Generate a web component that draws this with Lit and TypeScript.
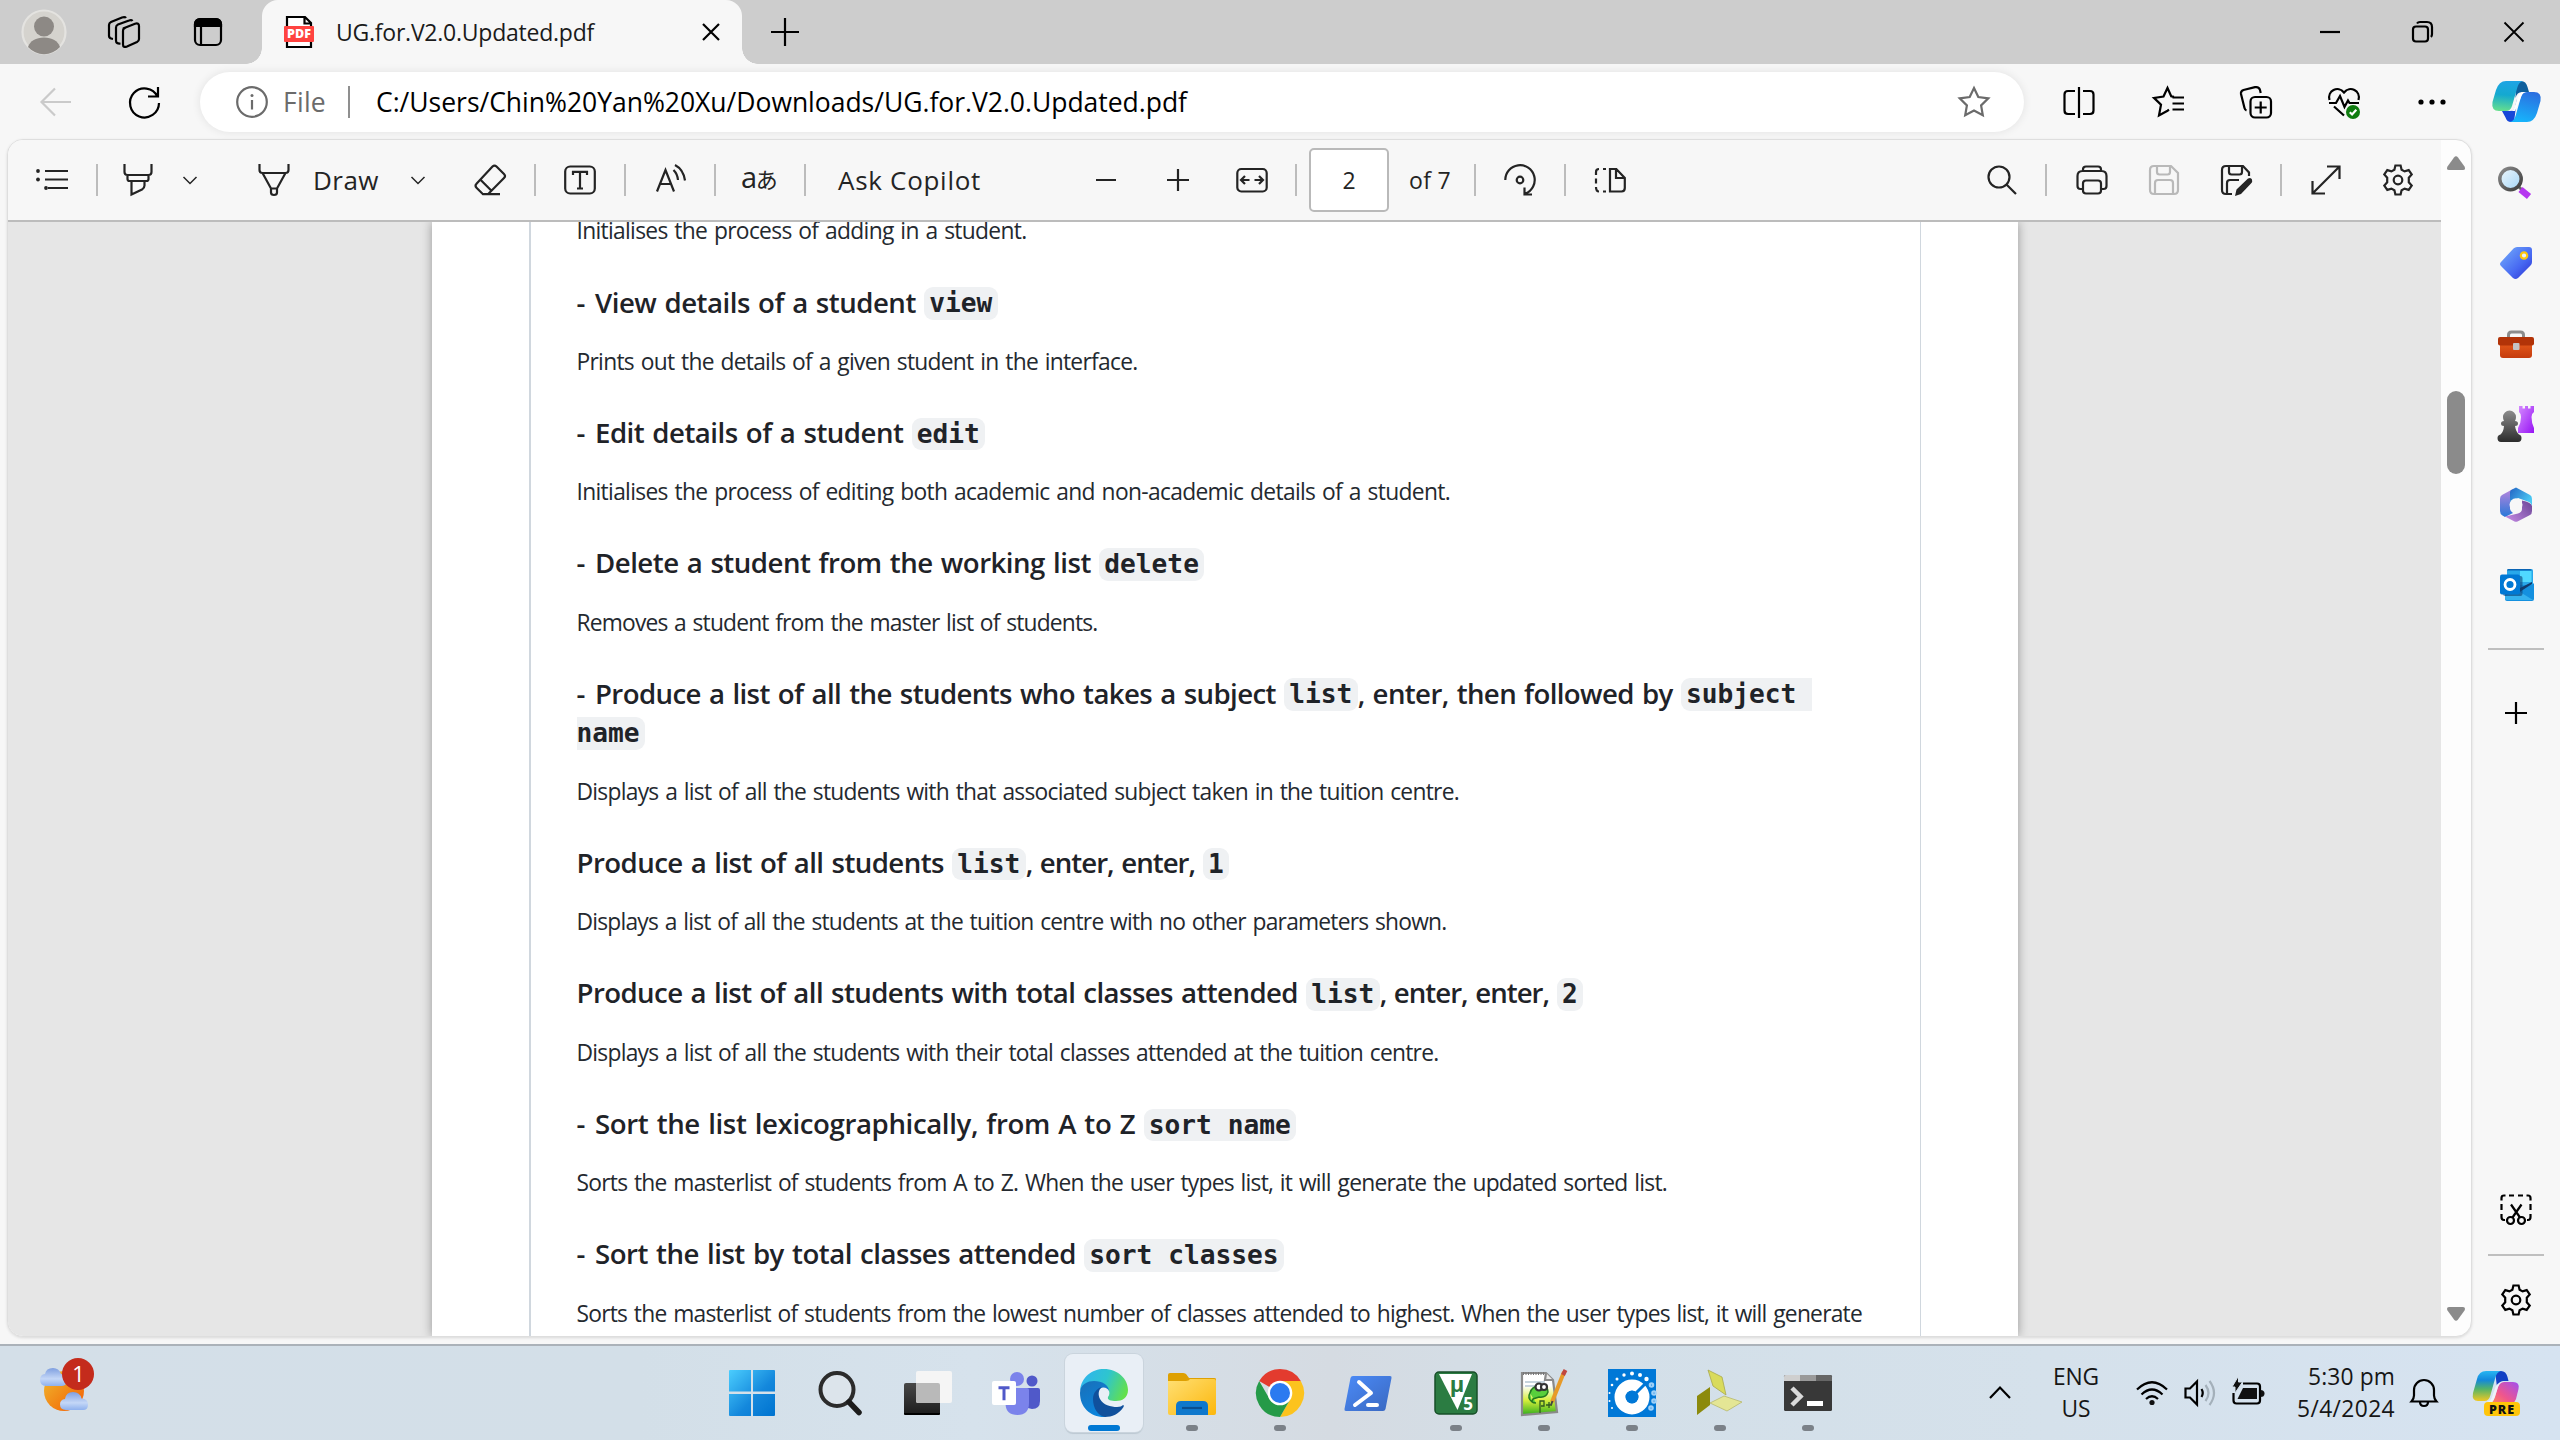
import { LitElement, html, svg, css, unsafeCSS, nothing } from "lit";
import { customElement, property } from "lit/decorators.js";

/** A run of text whose tracking is adjusted so that it fills the given advance width. */
@customElement("fit-text")
class FitText extends LitElement {
  static styles = css`
    :host { display: inline; white-space: pre; }
  `;
  @property() text = "";
  @property({ type: Number }) width = 0;

  firstUpdated() {
    const span = this.renderRoot.querySelector("span") as HTMLElement;
    const natural = span.getBoundingClientRect().width;
    if (this.width && natural) {
      span.style.letterSpacing = `${(this.width - natural) / this.text.length}px`;
    }
  }

  render() {
    return html`<span>${this.text}</span>`;
  }
}

const fit = (text: string, width: number) => html`<fit-text .text=${text} .width=${width}></fit-text>`;

/** Stroked or filled pictogram in its own pixel box. */
const icon = (w: number, h: number, body: unknown, cls = "") =>
  html`<svg class="icon ${cls}" width=${w} height=${h} viewBox="0 0 ${w} ${h}">${body}</svg>`;

const gearPath =
  "M13.4 1.5h5.2l1 4.2 3 1.7 4.1-1.3 3 4.3-2.9 3.3v4.6l2.9 3.3-3 4.3-4.1-1.3-3 1.7-1 4.2h-5.2l-1-4.2-3-1.7-4.1 1.3-3-4.3 2.9-3.3v-4.6L2.3 10.400l3-4.3 4.100 1.300 3-1.700z";

const I = {
  avatar: svg`<circle cx="22" cy="22" r="21.500" fill="#d5d3ce" stroke="#e4e3e0"/><ellipse cx="22" cy="16.500" rx="10" ry="10" fill="#8d8985"/><path d="M6 37c2-6 8-9.500 16-9.500S36 31 38 37a21.500 21.500 0 0 1-32 0z" fill="#8d8985"/>`,
  workspaces: svg`<path d="M15 12.500l12-4.800q4-1.200 4 2.300v13q0 2-2 3l-10 4.500q-4 1.500-4-2V15q0-1.800 1-2.500z"/><path d="M12.500 27.500q-4.500.5-4.500-3V11.500q0-2 2-3L21 4.500q2.500-1 3.500.5"/><path d="M5 23q-4-.5-4-3V9q0-2 2-3L14 1.500q3-1 4 .5"/>`,
  tabs: svg`<rect x="3" y="3" width="26" height="26" rx="5"/><path d="M3 10V8a5 5 0 0 1 5-5h16a5 5 0 0 1 5 5v2z" fill="#000"/><path d="M9 10v19"/>`,
  pdf: svg`<path d="M3 11V1h18l6 6v4M3 25v6h24v-6M20.500 1v6.500H27" stroke="#000" stroke-width="2.200" fill="#fff"/><rect x="0" y="10" width="30" height="16" rx="1" fill="#ff4340"/><text x="15" y="22.300" class="pdf-mark">PDF</text>`,
  x: svg`<path d="M8 8l16 16M24 8L8 24"/>`,
  plus: svg`<path d="M2 16h28M16 2v28"/>`,
  plusSmall: svg`<path d="M5 16h22M16 5v22"/>`,
  minimize: svg`<path d="M6 16h20"/>`,
  restore: svg`<rect x="7" y="10.500" width="15" height="15" rx="3"/><path d="M11 7.500q1-1.500 3-1.500h7q5 0 5 5v7q0 2-1 3"/>`,
  close: svg`<path d="M6.500 6.500l19 19M25.500 6.500l-19 19"/>`,
  back: svg`<path d="M31 16H2M15 2.500L1.500 16 15 29.500"/>`,
  refresh: svg`<path d="M29.500 10.500A14.500 14.500 0 1 0 31 17M30 1v9.500H20"/>`,
  info: svg`<circle cx="16" cy="16" r="14.800"/><path d="M16 14v9.500"/><circle cx="16" cy="9.500" r="1.500" fill="#6b6b6b" stroke="none"/>`,
  star: svg`<path d="M16 2l4.300 9 10 1.400-7.200 7 1.700 9.900L16 24.600l-8.800 4.700 1.700-9.900-7.200-7 10-1.400z"/>`,
  split: svg`<path d="M12 5H5Q1.500 5 1.500 8.500v16Q1.500 28 5 28h7M20 5h7q3.500 0 3.500 3.500v16Q30.500 28 27 28h-7M16 1v31"/>`,
  favs: svg`<path d="M22 10.800l-2.800-.5L15.500 2l-4 8.500-9.500 1.400 7 6.800-2 10.800 8.500-4.800 1.500-1M20.500 11.500H32M20.500 17.500H32M20.500 23.500H32"/>`,
  collections: svg`<rect x="10.500" y="11" width="20.500" height="20.500" rx="4.500"/><path d="M20.700 15.500v12M14.700 21.500h12M6.500 24.500Q5 24 4.500 22L1 8Q.5 5 3.500 4L15 1.200q4-.7 5 2.800l.7 3"/>`,
  heart: svg`<path d="M1.500 14C-1 5 10 -1 16 6.500 22 -1 33 5 30.500 14M1 17h7l4-7 4.500 11 3.500-6.500 1.500 2.500H31M6 20.500l10 9"/><circle cx="25" cy="26" r="7" fill="#107c10" stroke="none"/><path d="M21.800 26.200l2.300 2.300 4.200-4.700" stroke="#fff"/>`,
  dots: svg`<g fill="#000" stroke="none"><circle cx="5" cy="16" r="2.600"/><circle cx="16" cy="16" r="2.600"/><circle cx="27" cy="16" r="2.600"/></g>`,
  copilot: svg`<defs>
      <linearGradient id="ca" x1=".3" y1="0" x2=".2" y2="1"><stop offset="0" stop-color="#1ea4e4"/><stop offset=".45" stop-color="#14a9d0"/><stop offset="1" stop-color="#67e08c"/></linearGradient>
      <linearGradient id="cb" x1=".7" y1="0" x2=".4" y2="1"><stop offset="0" stop-color="#2b6fe0"/><stop offset="1" stop-color="#17b4fb"/></linearGradient>
    </defs>
    <path d="M24 1h5q5 0 6.500 6l1.500 5H30q-5 0-6.500 6z" fill="#0f5f9c"/>
    <path d="M10 31h8q4 0 5-4l2-8-3 23h-3q-4 0-5.500-4.500z" fill="#1747d8"/>
    <path d="M14 1h17q-4 1-5.500 6L20 26q-1.500 5-6 5H7q-8 0-6.500-9L4 10Q7 1 14 1z" fill="url(#ca)"/>
    <path d="M35 42H18q4-1 5.500-6L29 17q1.500-5 6-5h7q8 0 6.500 9L45 33q-3 9-10 9z" fill="url(#cb)"/>
    <path d="M29 17q1.500-5 6-5h-3q-4.500 0-6 5l-3.500 10q-1 4-4.500 4h5z" fill="#fff"/>`,
  list: svg`<path d="M9 7h23M9 15.500h23M12 24h20"/><g fill="#242424" stroke="none"><circle cx="2" cy="7" r="1.900"/><circle cx="2" cy="15.500" r="1.900"/><circle cx="10" cy="24" r="1.900"/></g>`,
  highlighter: svg`<path d="M2.500 0v8q0 3 3 3h21q3 0 3-3V0M5.500 11v4q0 2 2 2h17q2 0 2-2v-4M9.500 17v13.500l10.500-5q2.500-1.500 2.500-4V17"/>`,
  chevron: svg`<path d="M9.500 13l6.500 6.500L22.500 13"/>`,
  pen: svg`<path d="M1.500 0v6q0 3 3 3h23q3 0 3-3V0M4.500 9L13 24.500h6L27.500 9M13 24.500v4q0 2.500 3 2.500t3-2.500v-4"/>`,
  eraser: svg`<path d="M18.500 2.500q2-2 4 0l7.500 7.500q2 2 0 4L14 30.200H9L2.500 23.700q-2-2 0-4zM6.500 15.800l11 11M12 30.200h14"/>`,
  textBox: svg`<rect x="1.200" y="2.500" width="29.600" height="27" rx="5"/><path d="M9 11V7.800h14V11M16 8v16.500M13 24.500h6"/>`,
  readAloud: svg`<path d="M2 27.500L10.500 6 19 27.500M5 20h11M18.500 6q4 4 4.500 10M20 1q8.500 4.500 10 15.500"/>`,
  minus: svg`<path d="M6 16h20"/>`,
  fitWidth: svg`<rect x="1.300" y="5" width="29.400" height="22.500" rx="4"/><path d="M13.500 16H6M9 12l-4 4 4 4M18.500 16H26M23 12l4 4-4 4"/>`,
  rotate: svg`<path d="M1.300 16A14.700 14.700 0 1 1 21.500 29.500L21 30M20.500 23.500v7H28"/><circle cx="16" cy="16" r="3.300"/>`,
  pageView: svg`<path d="M16 5v22.500h11.500q3.300 0 3.300-3.500V14l-8.500-9zM22 5v9h8.500M12 5H9M5 5Q2 5 2 8v3M2 14.500v5M2 23q0 4.500 3 4.500M9 27.500h3"/>`,
  search: svg`<circle cx="13" cy="13" r="10.500"/><path d="M20.500 20.500L30 30"/>`,
  print: svg`<path d="M7 7V5.500Q7 2.500 10 2.500h12q3 0 3 3V7M7 25H4.500q-3 0-3-3V12q0-5 5-5h19q5 0 5 5v10q0 3-3 3H25"/><rect x="7" y="16.500" width="18" height="13" rx="3"/>`,
  save: svg`<path d="M2 6q0-4 4-4h17l7 7v17q0 4-4 4H6q-4 0-4-4zM9 2v6q0 2.500 2.500 2.500h8Q22 10.500 22 8V2M7 30V19q0-3 3-3h12q3 0 3 3v11"/>`,
  saveAs: svg`<path d="M12 30H6q-4 0-4-4V6q0-4 4-4h17l6 6.500V12M9 2v6q0 2.500 2.500 2.500h8Q22 10.500 22 8V2M7 30V19q0-3 3-3h9"/><path d="M28 14.500q3-1.500 4 1 .8 2-1 4L21 30l-6 2 1.500-6.500z" fill="#242424" stroke="none"/>`,
  expand: svg`<path d="M2.500 29.500l27-27M17 2.500h12.500V15M2.500 17v12.500H15"/>`,
  gear: svg`<path d=${gearPath}/><circle cx="16" cy="16" r="4.300"/>`,
  sbSearch: svg`<defs><linearGradient id="sa" x1="0" y1="0" x2="1" y2="1"><stop offset="0" stop-color="#8b8b8b"/><stop offset="1" stop-color="#3c3c3c"/></linearGradient><linearGradient id="sb" x1="0" y1="0" x2="1" y2="1"><stop offset="0" stop-color="#eef6fb"/><stop offset="1" stop-color="#a4d6f7"/></linearGradient></defs>
    <path d="M21 22l4 4" stroke="#666" stroke-width="3"/><path d="M22.500 24.500l8.500 7" stroke="#b536f0" stroke-width="6.500"/><circle cx="12.500" cy="14" r="10.700" fill="url(#sb)" stroke="url(#sa)" stroke-width="3.500"/>`,
  sbTag: svg`<defs><linearGradient id="ta" x1="0" y1="0" x2="1" y2="1"><stop offset="0" stop-color="#76b0fb"/><stop offset=".6" stop-color="#4769f2"/><stop offset="1" stop-color="#2a2fd0"/></linearGradient></defs>
    <path d="M19 2h12q3 0 3 3v12q0 2-1.500 3.500L20 33q-2.500 2-5 0L3 21q-2-2 0-4L15.500 3.500Q17 2 19 2z" fill="url(#ta)"/><circle cx="26" cy="10.500" r="3.200" fill="#e9f0ff" stroke="#fdc60e" stroke-width="2.200"/>`,
  sbTool: svg`<defs><linearGradient id="oa" x1="0" y1="0" x2="0" y2="1"><stop offset="0" stop-color="#e85c1c"/><stop offset="1" stop-color="#c53c0e"/></linearGradient></defs>
    <path d="M10.500 12V9q0-3 3-3h9q3 0 3 3v3" stroke="#8c8c8c" stroke-width="3" fill="none"/><rect x="2" y="15" width="32" height="17" rx="3" fill="url(#oa)"/><rect x="0" y="11" width="36" height="8.500" rx="2" fill="#b23308"/><rect x="15" y="17" width="6.500" height="7" rx="1" fill="#c4c4c4"/>`,
  sbChess: svg`<defs><linearGradient id="ha" x1="0" y1="0" x2="0" y2="1"><stop offset="0" stop-color="#8d8d8d"/><stop offset="1" stop-color="#2c2c2c"/></linearGradient><linearGradient id="hb" x1="0" y1="0" x2="1" y2="1"><stop offset="0" stop-color="#d58cff"/><stop offset="1" stop-color="#9714f4"/></linearGradient></defs>
    <path d="M21 0h3.500v2.500H27V0h3v2.500h2.500V0H36v6q-2.500 1.500-2.500 5 0 6 2.500 11v5H20v-5q3-5 3-11 0-3.500-2-5z" fill="url(#hb)"/>
    <path d="M5 11a6.500 6.500 0 0 1 13 0q0 2.500-1 4 3 0 3 2.500T17 20q1 6 4 8.500 2.500.5 2.500 3.500 0 4-3.500 4H3q-3.500 0-3.500-4 0-3 3-3.500Q5.500 26 6 20q-3 0-3-2.500T6 15q-1-1.500-1-4z" fill="url(#ha)"/>`,
  sb365: svg`<defs><linearGradient id="ma" x1="0" y1="0" x2="0" y2="1"><stop offset="0" stop-color="#b985dd"/><stop offset="1" stop-color="#2878d8"/></linearGradient><linearGradient id="mb" x1="0" y1="0" x2="1" y2=".6"><stop offset="0" stop-color="#2364c4"/><stop offset="1" stop-color="#4bcbf5"/></linearGradient><linearGradient id="mc" x1="0" y1=".7" x2="1" y2="0"><stop offset="0" stop-color="#bd84dd"/><stop offset="1" stop-color="#6a4596"/></linearGradient></defs>
    <path d="M15 2L4 8q-2 1-2 4v12q0 3 2.500 4.500L7 30l8-4q-2.500-1.500-3-4V9z" fill="url(#ma)"/>
    <path d="M15 2l3-1.500L32 8q2 1 2 4v7q-1-3-3-4l-11-4-8 6V5q0-2 3-3z" fill="url(#mb)"/>
    <path d="M7 29.500l9.500 5q1.500.7 3 0L32 28q2-1 2-4v-5q-1-4-10-5.500V22q0 3-4 4.500z" fill="url(#mc)"/><circle cx="18" cy="17.800" r="6.500" fill="#f7f7f7"/>`,
  sbOutlook: svg`<rect x="9" y="2" width="26" height="29" rx="1.500" fill="#28a8ea"/><path d="M9 3.500Q9 2 10.500 2H32q1.500 0 1.500 1.500H9z" fill="#0a64b4"/><path d="M22 4h11.500v11H22z" fill="#50d9ff"/><path d="M7 18l27 0 2-2v16q0 2-2 2H9q-2 0-2-2z" fill="#1490df"/><path d="M34 15v2L20 26v-4z" fill="#123b6d"/><path d="M7 29q10-5 15-4l13 8H9q-2 0-2-2z" fill="#35b1ee"/><rect x="5" y="9" width="19.500" height="20" rx="2" fill="#0b3e73" opacity=".6"/><rect x="2" y="7.500" width="20" height="20" rx="2" fill="#0078d4"/><circle cx="12" cy="17.500" r="5" fill="none" stroke="#fff" stroke-width="2.800"/>`,
  snip: svg`<path d="M5 27H4q-2.500 0-2.500-3v-3M1.500 17v-6M1.500 7.500V5Q1.500 2.500 4 2.500h1.500M9 2.500h5M18 2.500h5M26.500 2.500H28q2.500 0 2.500 2.500v2.500M30.500 11v6M30.500 21v3q0 3-2.500 3h-1"/><path d="M11 11.500l9 13M21.500 11.500l-9 13"/><circle cx="10.500" cy="27.500" r="3.500"/><circle cx="21.500" cy="27.500" r="3.500"/>`,
  weather: svg`<defs><linearGradient id="wa" x1="0" y1="0" x2="1" y2="1"><stop offset="0" stop-color="#efbb30"/><stop offset=".8" stop-color="#f36f0b"/></linearGradient><linearGradient id="wb" x1="0" y1="0" x2="0" y2="1"><stop offset="0" stop-color="#7f9fe0"/><stop offset=".6" stop-color="#c4d7f7"/><stop offset="1" stop-color="#8fb1ee"/></linearGradient></defs>
    <circle cx="24" cy="33" r="20" fill="url(#wa)"/><path d="M6 28q-6-.5-6-6t5-6q1-6 8-6 6 0 8 6 6 .5 6 6t-5 6z" fill="url(#wb)"/><path d="M26 52q-6-.5-6-5.500t5-5.500q1-7 8-7t8.500 6.500q6.500.5 6.500 6T43 52z" fill="url(#wb)"/><circle cx="38" cy="16" r="16" fill="#c42b1c"/><text x="38.500" y="24" class="badge-mark">1</text>`,
  start: svg`<defs><linearGradient id="st" gradientUnits="userSpaceOnUse" x1="0" y1="0" x2="46" y2="46"><stop offset="0" stop-color="#4dd0ff"/><stop offset=".6" stop-color="#1488dc"/><stop offset="1" stop-color="#0074d0"/></linearGradient></defs><path d="M2 1h21v21.500H1V2q0-1 1-1zM25 1h21q1 0 1 1v20.500H25zM1 25h22v22H2q-1 0-1-1zM25 25h22v21q0 1-1 1H25z" fill="url(#st)"/>`,
  tbSearch: svg`<circle cx="21" cy="20.500" r="16.500" stroke="#2b2b2b" stroke-width="4" fill="#e3e8ec" fill-opacity=".5"/><path d="M33 33l10 10.500" stroke="#1c1c1c" stroke-width="5.500" stroke-linecap="round"/>`,
  taskView: svg`<defs><linearGradient id="va" x1="0" y1="0" x2="0" y2="1"><stop offset="0" stop-color="#484848"/><stop offset="1" stop-color="#1c1c1c"/></linearGradient></defs><rect x="0" y="14" width="36" height="32" rx="2" fill="url(#va)"/><path d="M0 44h36v1q0 1-1.500 1h-33Q0 46 0 45z" fill="#000"/><rect x="12" y="2" width="36" height="32" rx="2" fill="#f5f5f5"/><path d="M12 14h22q2 0 2 2v18H14q-2 0-2-2z" fill="#b9b9b9"/>`,
  teams: svg`<circle cx="25" cy="10" r="7" fill="#7b83eb"/><circle cx="40" cy="12" r="5.500" fill="#5059c9"/><path d="M33 19h13q2 0 2 2v11q0 8-8 8-4 0-7-3z" fill="#5059c9"/><path d="M14 19h21q2 0 2 2v13q0 12-11.500 12T13.500 35z" fill="#7b83eb"/><rect x="0" y="12" width="24" height="24" rx="2" fill="#fff"/><path d="M6.500 18.700h11M12 18.700v12.500" stroke="#5059c9" stroke-width="3"/>`,
  edge: svg`<defs><linearGradient id="ea" x1="0" y1=".3" x2="1" y2=".6"><stop offset="0" stop-color="#2fb4ee"/><stop offset=".5" stop-color="#2ec5cf"/><stop offset="1" stop-color="#64e04a"/></linearGradient><linearGradient id="eb" x1="0" y1="0" x2=".5" y2="1"><stop offset="0" stop-color="#1a6fb8"/><stop offset="1" stop-color="#0a84dc"/></linearGradient></defs>
    <path d="M0 22C1 8 12 0 24 0c14 0 24 10 24 21 0 8-6 11-12 11-5 0-9-1-8-4 3-4 1-10-6-12C12 13 3 16 0 22z" fill="url(#ea)"/>
    <path d="M0 24C0 15 8 12 14 12c8 0 15 4 15 10-1-2-3-3.500-5.500-3.500C18 18.500 14 25 16 33c2 7 8 10 13 10-1 3-3 5-5 5C10 48 0 38 0 24z" fill="url(#eb)"/>
    <path d="M13 30c0-6 4-11 9-12-4 3-4 8-2 12 3 6 11 8 17 8 3 0 5-1 6-2 1 0 1 1 .5 2C39 45 32 48 25 48c-7-1-12-9-12-18z" fill="#10509c"/>`,
  explorer: svg`<defs><linearGradient id="xa" x1="0" y1="0" x2="1" y2="1"><stop offset="0" stop-color="#ffdf73"/><stop offset="1" stop-color="#fcb70c"/></linearGradient></defs><path d="M0 6q0-2 2-2h13q3 0 4.500 3L21 9h25q2 0 2 1v8H0z" fill="#dea002"/><path d="M0 12h18q3 0 4-2h24q2 0 2 2v32q0 2-2 2H2q-2 0-2-2z" fill="url(#xa)"/><path d="M8 46V37q0-5 5-5h22q5 0 5 5v9z" fill="#0f78cc"/><path d="M14 39h20" stroke="#0a4f90" stroke-width="2.200"/>`,
  chrome: svg`<path d="M24 24L3.200 12A24 24 0 0 1 44.800 12z" fill="#e33b2e"/><path d="M24 24L24 12H44.800A24 24 0 0 1 24 48L34.400 30z" fill="#fcc31e"/><path d="M24 24L34.400 30 24 48A24 24 0 0 1 3.200 12L13.600 30z" fill="#259a48"/><circle cx="24" cy="24" r="12.300" fill="#fff"/><circle cx="24" cy="24" r="10" fill="#2b7af0"/>`,
  powershell: svg`<defs><linearGradient id="pa" x1="0" y1="0" x2="1" y2="1"><stop offset="0" stop-color="#4b8bf8"/><stop offset="1" stop-color="#3a68c0"/></linearGradient></defs><path d="M9 7h37q2 0 1.500 2l-6 31q-.5 2-2.500 2H2q-2 0-1.500-2l6-31Q7 7 9 7z" fill="url(#pa)"/><path d="M15 13l12 11-16 12M24 36h9" stroke="#fff" stroke-width="4" stroke-linecap="round" stroke-linejoin="round"/>`,
  keil: svg`<rect x="3" y="3" width="42" height="42" rx="4" fill="#2b7c42" stroke="#174f28" stroke-width="1.500"/><path d="M7 5h33L25.500 41z" fill="#fff"/><text x="25" y="23" class="mu">µ</text><text x="36" y="41" class="five">5</text>`,
  notepad: svg`<defs><linearGradient id="na" x1="0" y1="0" x2="0" y2="1"><stop offset=".3" stop-color="#fff"/><stop offset=".65" stop-color="#d7ee3c"/><stop offset="1" stop-color="#2fae1c"/></linearGradient></defs><path d="M2 4h24l7 7 4 32L2 46z" fill="url(#na)" stroke="#8a8a8a"/><path d="M26 4l-1 7h8" fill="#e8e8e8" stroke="#8a8a8a"/><path d="M3 4.500h22" stroke="#777" stroke-width="3" stroke-dasharray="1 1.500"/><path d="M5 13h20M5 17h12" stroke="#c6d4dd"/><path d="M10 24q2-8 11-7 7 0 7 6-2 6-9 5l-6 2q-3 4 3 4M10 24q-3 5 2 9" fill="#58cf3c" stroke="#247a20" stroke-width="1.500"/><circle cx="19" cy="18" r="3.500" fill="#fff" stroke="#333"/><circle cx="24" cy="18" r="3" fill="#fff" stroke="#333"/><path d="M20 44V32h4v5h-3M26 36h6M29 33v6" stroke="#305a20" stroke-width="1.300" fill="none"/><path d="M44 3L32 33" stroke="#e79a28" stroke-width="4"/><path d="M45.500 1L43 6" stroke="#c0473f" stroke-width="4"/><path d="M32.500 32L31 36" stroke="#444" stroke-width="2"/>`,
  dial: svg`<path d="M0 0h48v48H0z" fill="#0078d7"/><circle cx="24" cy="28" r="12" fill="none" stroke="#fff" stroke-width="11"/><path d="M24 28L38 14" stroke="#0078d7" stroke-width="3"/><circle cx="24" cy="28" r="6.300" fill="#0078d7"/><g fill="#fff"><circle cx="24" cy="4.500" r="2"/><circle cx="32" cy="6" r="2"/><circle cx="38.500" cy="10" r="2.200"/><circle cx="16" cy="6" r="1.700"/><circle cx="9" cy="10" r="1.500"/><circle cx="4" cy="16" r="1.300"/><circle cx="1.500" cy="24" r="1"/><circle cx="1.500" cy="32" r="1"/><circle cx="4" cy="39" r="1"/></g><g fill="none" stroke="#9fd0f7"><circle cx="43.500" cy="16" r="1.700"/><circle cx="46" cy="24" r="1.700"/><circle cx="46" cy="32" r="1.700"/><circle cx="43" cy="39" r="1.700"/></g>`,
  vivado: svg`<path d="M12 1l14 7 4 18-13-9z" fill="#d9db5c" stroke="#a8a84a" stroke-width=".8"/><path d="M14 18v18L1 46V27z" fill="#8c8a0c"/><path d="M14 34l14-7 18 6-15 9z" fill="#e4e695" stroke="#b7b96c" stroke-width=".8"/>`,
  terminal: svg`<rect x="0" y="6" width="48" height="36" rx="1.500" fill="#383838"/><path d="M1.500 6H16v6H0V7.500Q0 6 1.500 6z" fill="#cfcfcf"/><path d="M16 6h16v6H16z" fill="#9a9a9a"/><path d="M32 6h14.500Q48 6 48 7.500V12H32z" fill="#666"/><path d="M8 19l8.500 8.500L8 36" stroke="#dadada" stroke-width="4.500"/><path d="M23 34.500h16" stroke="#fff" stroke-width="5"/>`,
  up: svg`<path d="M6 21l10-10.500L26 21"/>`,
  wifi: svg`<path d="M1 12.500q15-14.500 30 0M5.500 17.500q10.500-10 21 0M10 22q6-5.500 12 0"/><circle cx="16" cy="25.500" r="2.600" fill="#111" stroke="none"/>`,
  volume: svg`<path d="M1.500 11.500h4.500l7-7v23l-7-7H1.500z"/><path d="M17.500 12q2.500 4 0 8"/><path d="M21.500 8q6 8 0 16M25.500 4q9 12 0 24" stroke="#a4b0ba"/>`,
  battery: svg`<path d="M11 6.500h14q3 0 3 3v14q0 3-3 3H4.500q-3 0-3-3V16"/><path d="M28.500 13q4 0 4 3.500t-4 3.500z" fill="#111" stroke="none"/><path d="M11 11h14v11H5.500z" fill="#111" stroke="none"/><path d="M6.500-1v6h4L3 16v-6H0z" fill="#111" stroke="#d5e1ec" stroke-width="1"/>`,
  bell: svg`<path d="M3.500 24.500q2.500-3 2.500-6V13a10 10 0 0 1 20 0v5.500q0 3 2.500 6zM12 25q0 4 4 4t4-4"/>`,
  copilotPre: svg`<defs><linearGradient id="ra" x1="0" y1="0" x2="0" y2="1"><stop offset="0" stop-color="#27b6f2"/><stop offset=".3" stop-color="#1388dc"/><stop offset=".6" stop-color="#54b467"/><stop offset="1" stop-color="#f0c824"/></linearGradient><linearGradient id="rb" x1="1" y1="0" x2="0" y2="1"><stop offset="0" stop-color="#a04ff0"/><stop offset=".55" stop-color="#f0568c"/><stop offset="1" stop-color="#ff9a4c"/></linearGradient></defs>
    <path d="M22 1h6q5 0 6.500 6l1 4H30q-4 0-6 6z" fill="#1240c4"/><path d="M13 1h15q-4 1-5.500 6l-5 18q-1.500 6-6 6H5q-6.500 0-5-8L4 9Q6 1 13 1z" fill="url(#ra)"/><path d="M16 35q3-1 5-6l4-12q2-5 6-5h9q7 0 5.500 7L43 29q-3 7-9 7z" fill="url(#rb)"/><path d="M25 17q2-5 6-5h-2q-5 1-6.500 5L19 27q-1 4-5 5h5q2-2 3-5z" fill="#eef2f8"/><rect x="11" y="32" width="36" height="14" rx="4" fill="#ffc50a"/><text x="29" y="43.500" class="pre-mark">PRE</text>`,
};

type Part = { t: string; w: number } | { c: string; cls?: string } | { br: true };
interface Section { head: Part[]; body: string; width: number }

const dash: Part = { t: "- ", w: 18.5 };

const SECTIONS: Section[] = [
  { head: [dash, { t: "View details of a student ", w: 329 }, { c: "view" }], body: "Prints out the details of a given student in the interface.", width: 561 },
  { head: [dash, { t: "Edit details of a student ", w: 316.5 }, { c: "edit" }], body: "Initialises the process of editing both academic and non-academic details of a student.", width: 873.5 },
  { head: [dash, { t: "Delete a student from the working list ", w: 504 }, { c: "delete" }], body: "Removes a student from the master list of students.", width: 521 },
  { head: [dash, { t: "Produce a list of all the students who takes a subject ", w: 689 }, { c: "list" }, { t: ", enter, then followed by ", w: 323 }, { c: "subject ", cls: "head" }, { br: true }, { c: "name", cls: "tail" }], body: "Displays a list of all the students with that associated subject taken in the tuition centre.", width: 882.5 },
  { head: [{ t: "Produce a list of all students ", w: 375.5 }, { c: "list" }, { t: ", enter, enter, ", w: 177 }, { c: "1" }], body: "Displays a list of all the students at the tuition centre with no other parameters shown.", width: 870 },
  { head: [{ t: "Produce a list of all students with total classes attended ", w: 729.5 }, { c: "list" }, { t: ", enter, enter, ", w: 177 }, { c: "2" }], body: "Displays a list of all the students with their total classes attended at the tuition centre.", width: 862 },
  { head: [dash, { t: "Sort the list lexicographically, from A to Z ", w: 548.5 }, { c: "sort name" }], body: "Sorts the masterlist of students from A to Z. When the user types list, it will generate the updated sorted list.", width: 1090.5 },
  { head: [dash, { t: "Sort the list by total classes attended ", w: 489 }, { c: "sort classes" }], body: "Sorts the masterlist of students from the lowest number of classes attended to highest. When the user types list, it will generate", width: 1285.5 },
];

const TASKS: { art: unknown; state?: "active" | "open" }[] = [
  { art: I.start }, { art: I.tbSearch }, { art: I.taskView }, { art: I.teams },
  { art: I.edge, state: "active" }, { art: I.explorer, state: "open" }, { art: I.chrome, state: "open" },
  { art: I.powershell }, { art: I.keil, state: "open" }, { art: I.notepad, state: "open" },
  { art: I.dial, state: "open" }, { art: I.vivado, state: "open" }, { art: I.terminal, state: "open" },
];

/** Spacing utilities: .g12 puts 12px before the element. */
const gaps = unsafeCSS(Array.from({ length: 120 }, (_, n) => `.g${n}{margin-left:${n}px}`).join(""));

@customElement("app-root")
class AppRoot extends LitElement {
  static styles = css`
    :host { display: block; width: 2560px; height: 1440px; overflow: hidden; background: #f7f7f7; color: #000; font-family: "Open Sans", "Noto Sans", sans-serif; }
    * { box-sizing: border-box; }
    svg.icon { display: block; flex: none; fill: none; stroke: #000; stroke-width: 2.2; overflow: visible; }
    svg.art { stroke: none; }
    svg.thin { stroke-width: 1.8; }
    svg.dim { stroke: #cacaca; }
    svg.mid { stroke: #6b6b6b; }
    svg.off { stroke: #b9b9b9; }
    .pdf-mark { font: 800 12.500px "Open Sans", sans-serif; fill: #fff; stroke: none; text-anchor: middle; }
    .badge-mark { font: 400 22px "Open Sans", sans-serif; fill: #fff; text-anchor: middle; }
    .mu { font: 700 22px "Open Sans", sans-serif; fill: #2b7c42; text-anchor: middle; }
    .five { font: 700 17px "Open Sans", sans-serif; fill: #fff; text-anchor: middle; }
    .pre-mark { font: 800 12.500px "Open Sans", sans-serif; fill: #111; text-anchor: middle; letter-spacing: 1px; }

    .tabstrip { display: flex; align-items: center; height: 64px; background: #cdcdcd; padding: 0 30px 0 22px; }
    .tab { position: relative; display: flex; align-items: center; width: 480px; height: 64px; background: #f7f7f7; border-radius: 16px 16px 0 0; padding: 0 15px 0 22px; font-size: 23px; color: #1b1b1b; }
    .tab::before, .tab::after { content: ""; position: absolute; bottom: 0; width: 16px; height: 16px; }
    .tab::before { right: 100%; background: radial-gradient(circle at 0 0, transparent 15.5px, #f7f7f7 16px); }
    .tab::after { left: 100%; background: radial-gradient(circle at 100% 0, transparent 15.500px, #f7f7f7 16px); }
    .push { margin-left: auto; }

    .navbar { display: flex; align-items: center; height: 75px; padding-left: 40px; }
    .pill { display: flex; align-items: center; width: 1824px; height: 60px; background: #fff; border-radius: 30px; padding: 0 34px 0 36px; box-shadow: 0 0 10px rgba(0,0,0,.09); font-size: 26.500px; }
    .pill .scheme { color: #6b6b6b; }
    .rule { width: 2px; height: 32px; background: #8f8f8f; flex: none; }

    .middle { display: flex; height: 1205px; padding-left: 8px; }
    .frame { display: flex; width: 2465px; height: 1198px; border: 1px solid #dedede; border-radius: 16px; overflow: hidden; background: #fdfdfd; margin-left: -1px; box-shadow: 0 1px 3px rgba(0,0,0,.12); }
    .viewer { display: flex; flex-direction: column; width: 2434px; }
    .tools { display: flex; align-items: center; height: 82px; flex: none; background: #f7f7f7; border-bottom: 2px solid #bcbcbc; padding: 0 0 0 28px; font-size: 26px; color: #242424; }
    .tools svg.icon { stroke: #242424; }
    .tools svg.off { stroke: #b9b9b9; }
    .tools svg.hair { stroke-width: 1.5; }
    .tools .rule { background: #bcbcbc; }
    .glyph { width: 36px; font-size: 29px; font-family: "Open Sans", "Noto Sans CJK JP", sans-serif; letter-spacing: -1.500px; white-space: nowrap; line-height: 32px; padding-bottom: 5px; }
    .glyph .kana { font-size: 22px; }
    .pageno { display: flex; align-items: center; justify-content: center; width: 80px; height: 64px; background: #fff; border: 2px solid #b9b9b9; border-radius: 5px; font-size: 23px; }
    .of { font-size: 23px; }

    .canvas { display: flex; flex: 1; min-height: 0; overflow: hidden; background: #e6e6e6; padding-left: 424px; }
    .page { width: 1586px; background: #fff; box-shadow: 0 0 10px rgba(0,0,0,.35); padding: 0 97px; }
    .sheet { width: 1392px; height: 1300px; border: solid #d0d7de; border-width: 0 1px 0 2px; padding-left: 45.500px; color: #24292f; word-spacing: 1.5px; }
    .sheet p { margin: 0 0 33px; font-size: 22.800px; line-height: 36px; height: 36px; white-space: nowrap; }
    .sheet p.first { margin-top: -9px; margin-bottom: 33.500px; }
    .sheet h3 { margin: 0 0 22.400px; font-size: 27.600px; line-height: 39px; font-weight: 600; white-space: nowrap; color: #1f2328; }
    .sheet code { font: 700 26.200px/20px "DejaVu Sans Mono", monospace; background: #eff1f3; border-radius: 9px; padding: 1.300px 5.300px; white-space: pre; word-spacing: 0; }
    .sheet code.head { border-radius: 9px 0 0 9px; padding-right: 0; }
    .sheet code.tail { border-radius: 0 9px 9px 0; padding-left: 0; }

    .scroll { display: flex; flex-direction: column; align-items: center; width: 30px; padding: 16px 0 15px; }
    .scroll svg { display: block; fill: #8b8b8b; }
    .thumb { width: 18px; height: 83px; margin-top: 221px; border-radius: 9px; background: #8b8b8b; }
    .scroll .last { margin-top: auto; }

    .side { display: flex; flex-direction: column; align-items: center; width: 88px; margin-left: auto; padding: 26px 0 28px; }
    .apps { display: flex; flex-direction: column; gap: 44.400px; }
    .side hr { flex: none; width: 56px; height: 2px; border: 0; background: #bfbfbf; margin: 45px 0 47px; }
    .side .foot { margin-top: auto; display: flex; flex-direction: column; align-items: center; }
    .side .foot hr { margin: 29px 0 28px; }

    .taskbar { display: flex; align-items: center; height: 96px; border-top: 2px solid #abb2b9; background: linear-gradient(90deg, #d4dfe8, #d3dfe8 25%, #d6e2ec 38%, #d5dbe2 52%, #d3dfe8 62%, #d5e1eb 80%, #d6e3f1); padding-left: 40px; font-size: 22.800px; color: #161616; }
    .weather { width: 56px; height: 55px; margin-top: -16px; }
    .dock { display: flex; gap: 10px; margin-left: 617px; }
    .task { display: flex; flex-direction: column; align-items: center; width: 78px; height: 78px; border-radius: 8px; padding-top: 15px; }
    .task.active { background: #e9eff6; box-shadow: 0 0 0 1px #cad4dd, 0 2px 1px #bcc8d2; }
    .task i { width: 12px; height: 6px; margin-top: 8px; border-radius: 3px; background: #7b8188; }
    .task.active i { width: 32px; background: #0078d4; }
    .two { display: flex; flex-direction: column; line-height: 32px; white-space: nowrap; }
    .center { align-items: center; width: 60px; }
    .right { align-items: flex-end; width: 110px; }
    ${gaps}
  `;

  private heading(parts: Part[]) {
    return html`<h3>${parts.map((p) =>
      "t" in p ? fit(p.t, p.w) : "br" in p ? html`<br />` : html`<code class=${p.cls ?? ""}>${p.c}</code>`)}</h3>`;
  }

  render() {
    return html`
      <header class="tabstrip">
        ${icon(44, 44, I.avatar, "art")}
        ${icon(32, 32, I.workspaces, "g42")}
        ${icon(32, 32, I.tabs, "g52")}
        <div class="tab g38">
          ${icon(30, 32, I.pdf, "art")}
          <span class="g22">${fit("UG.for.V2.0.Updated.pdf", 258)}</span>
          ${icon(32, 32, I.x, "push")}
        </div>
        ${icon(32, 32, I.plus, "g27")}
        ${icon(32, 32, I.minimize, "push")}
        ${icon(32, 32, I.restore, "g60")}
        ${icon(32, 32, I.close, "g60 thin")}
      </header>

      <nav class="navbar">
        ${icon(32, 32, I.back, "dim")}
        ${icon(32, 32, I.refresh, "g56")}
        <div class="pill g40">
          ${icon(32, 32, I.info, "mid")}
          <span class="scheme g15">${fit("File", 43)}</span>
          <span class="rule g22"></span>
          <span class="g26">${fit("C:/Users/Chin%20Yan%20Xu/Downloads/UG.for.V2.0.Updated.pdf", 811)}</span>
          ${icon(32, 32, I.star, "push mid")}
        </div>
        ${icon(32, 32, I.split, "g39")}
        ${icon(32, 32, I.favs, "g57")}
        ${icon(32, 32, I.collections, "g56")}
        ${icon(32, 32, I.heart, "g56")}
        ${icon(32, 32, I.dots, "g56")}
        ${icon(49, 43, I.copilot, "g44 art")}
      </nav>

      <main class="middle">
        <div class="frame">
          <div class="viewer">
            <div class="tools">
              ${icon(32, 32, I.list)}
              <span class="rule g28"></span>
              ${icon(32, 32, I.highlighter, "g24")}
              ${icon(32, 32, I.chevron, "g20 hair")}
              ${icon(32, 32, I.pen, "g52")}
              <span class="g23">${fit("Draw", 66)}</span>
              ${icon(32, 32, I.chevron, "g23 hair")}
              ${icon(32, 32, I.eraser, "g40")}
              <span class="rule g28"></span>
              ${icon(32, 32, I.textBox, "g28")}
              <span class="rule g28"></span>
              ${icon(32, 32, I.readAloud, "g29")}
              <span class="rule g27"></span>
              <span class="glyph g25">a<span class="kana">あ</span></span>
              <span class="rule g27"></span>
              <span class="g32">${fit("Ask Copilot", 143)}</span>
              ${icon(32, 32, I.minus, "g109")}
              ${icon(32, 32, I.plusSmall, "g40")}
              ${icon(32, 32, I.fitWidth, "g42")}
              <span class="rule g27"></span>
              <span class="pageno g12">2</span>
              <span class="of g20">${fit("of 7", 42)}</span>
              <span class="rule g23"></span>
              ${icon(32, 32, I.rotate, "g28")}
              <span class="rule g28"></span>
              ${icon(32, 32, I.pageView, "g28")}
              <span class="push"></span>
              ${icon(32, 32, I.search)}
              <span class="rule g27"></span>
              ${icon(32, 32, I.print, "g29")}
              ${icon(32, 32, I.save, "g40 off")}
              ${icon(32, 32, I.saveAs, "g40")}
              <span class="rule g28"></span>
              ${icon(32, 32, I.expand, "g28")}
              ${icon(32, 32, I.gear, "g40")}
              <span class="g27"></span>
            </div>
            <div class="canvas">
              <article class="page">
                <div class="sheet">
                  <p class="first">${fit("Initialises the process of adding in a student.", 450)}</p>
                  ${SECTIONS.map((s) => html`${this.heading(s.head)}<p>${fit(s.body, s.width)}</p>`)}
                </div>
              </article>
            </div>
          </div>
          <div class="scroll">
            <svg width="18" height="14" viewBox="0 0 18 14"><path d="M7 1.500q2-2.500 4 0l6.500 9q1.500 3.500-1.500 3.500H2q-3 0-1.500-3.500z"/></svg>
            <div class="thumb"></div>
            <svg class="last" width="18" height="14" viewBox="0 0 18 14"><path d="M7 12.500q2 2.500 4 0l6.500-9Q19 0 16 0H2Q-1 0 .5 3.500z"/></svg>
          </div>
        </div>
        <aside class="side">
          <div class="apps">
            ${[I.sbSearch, I.sbTag, I.sbTool, I.sbChess, I.sb365, I.sbOutlook].map((a) => icon(36, 36, a, "art"))}
          </div>
          <hr />
          ${icon(32, 32, I.plusSmall)}
          <div class="foot">
            ${icon(32, 32, I.snip)}
            <hr />
            ${icon(32, 32, I.gear)}
          </div>
        </aside>
      </main>

      <footer class="taskbar">
        <div class="weather">${icon(56, 55, I.weather, "art")}</div>
        <div class="dock">
          ${TASKS.map((t) => html`<div class="task ${t.state ?? ""}">${icon(48, 48, t.art, "art")}${t.state ? html`<i></i>` : nothing}</div>`)}
        </div>
        ${icon(32, 32, I.up, "push")}
        <div class="two center g30"><span>${fit("ENG", 46)}</span><span>${fit("US", 29)}</span></div>
        ${icon(32, 32, I.wifi, "g30")}
        ${icon(32, 32, I.volume, "g16")}
        ${icon(32, 32, I.battery, "g16")}
        <div class="two right g21"><span>${fit("5:30 pm", 87)}</span><span>${fit("5/4/2024", 98)}</span></div>
        ${icon(32, 32, I.bell, "g13")}
        ${icon(47, 46, I.copilotPre, "g33 art")}
        <span class="g40"></span>
      </footer>
    `;
  }
}
